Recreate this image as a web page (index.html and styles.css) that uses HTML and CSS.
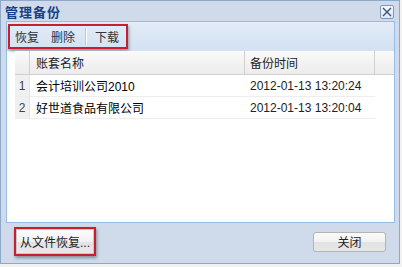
FILE: index.html
```html
<!DOCTYPE html>
<html>
<head>
<meta charset="utf-8">
<link rel="stylesheet" href="styles.css">
</head>
<body>
<div class="win">
  <div class="titlebar">
    <span class="title">管理备份</span>
    <span class="close"><svg width="10" height="10" viewBox="0 0 10 10"><path d="M1 1L9 9M9 1L1 9" stroke="#3c5478" stroke-width="1.4" fill="none"/></svg></span>
  </div>
  <div class="panel">
    <div class="toolbar">
      <div class="mark tbgroup">
        <span class="tbtn">恢复</span>
        <span class="tbtn">删除</span>
        <span class="tsep"></span>
        <span class="tbtn last">下载</span>
      </div>
    </div>
    <div class="grid">
      <div class="ghead">
        <div class="c num"></div>
        <div class="c name">账套名称</div>
        <div class="c time">备份时间</div>
        <div class="c fill"></div>
      </div>
      <div class="grow">
        <div class="c num">1</div>
        <div class="c name">会计培训公司2010</div>
        <div class="c time">2012-01-13 13:20:24</div>
      </div>
      <div class="grow">
        <div class="c num">2</div>
        <div class="c name">好世道食品有限公司</div>
        <div class="c time">2012-01-13 13:20:04</div>
      </div>
    </div>
  </div>
  <div class="footer">
    <div class="mark"><span class="btn wide">从文件恢复...</span></div>
    <span class="btn">关闭</span>
  </div>
</div>
</body>
</html>
```
FILE: styles.css
```css
html, body { margin: 0; padding: 0; }
body {
  width: 402px; height: 267px; overflow: hidden;
  background: #f2f2f2;
  font-family: "Liberation Sans", "Noto Sans CJK SC", sans-serif;
  font-size: 12px; color: #000;
}
.win {
  width: 400px; height: 264px; box-sizing: border-box;
  border: 1px solid #8fa8c8;
  background: #cfdbea;
  display: flex; flex-direction: column;
}
.titlebar {
  height: 20px; display: flex; align-items: center; justify-content: space-between;
  padding: 0 5px 0 4px;
}
.title { color: #15428b; font-weight: bold; font-size: 13px; letter-spacing: 1px; }
.close {
  width: 12px; height: 12px; border: 1px solid #7d98bd; border-radius: 2px;
  background: linear-gradient(#f4f8fd, #dde7f4);
  display: flex; align-items: center; justify-content: center;
  margin-top: 2px;
}
.panel {
  margin: 0 4px 0 5px; height: 202px; box-sizing: border-box;
  border: 1px solid #99bbe8; background: #fff;
  display: flex; flex-direction: column;
}
.toolbar {
  height: 29px; box-sizing: border-box; padding: 2px 0 0 1px;
  background: linear-gradient(#e3ecf8, #d3e1f2);
}
.mark {
  border: 2px solid #c4202d;
  box-shadow: 1px 2px 3px rgba(0,0,0,0.35);
}
.tbgroup {
  width: 120px; height: 25px; box-sizing: border-box;
  display: flex; align-items: center; padding-left: 4px;
  color: #333; white-space: nowrap;
}
.tbtn { padding: 0 6px 0 1px; margin-right: 5px; flex-shrink: 0; }
.tbtn.last { margin-right: 0; padding-right: 0; }
.tsep { flex-shrink: 0; width: 1px; height: 17px; background: #b8c8de; border-right: 1px solid #fff; margin: 0 7px 0 -1px; }
.grid { padding-left: 8px; }
.ghead {
  display: flex; height: 24px; box-sizing: border-box;
  background: linear-gradient(#fafafa, #ececec);
  border-bottom: 1px solid #d0d0d0;
  color: #222;
}
.c { display: flex; align-items: center; box-sizing: border-box; white-space: nowrap; }
.num { width: 15px; justify-content: center; }
.name { width: 215px; padding-left: 6px; }
.time { width: 130px; padding-left: 5px; }
.fill { flex: 1; }
.ghead .c { border-right: 1px solid #d0d0d0; }
.ghead .fill { border-right: none; }
.ghead .num { border-right: 1px solid #d0d0d0; }
.grow { display: flex; height: 22px; box-sizing: border-box; width: 360px; }
.grow .c { border-bottom: 1px solid #ededed; }
.grow .num { background: #f0f0f0; color: #444; border-right: 1px solid #e4e4e4; }
.grow .time { color: #222; }
.footer {
  flex: 1; display: flex; align-items: center; justify-content: space-between;
  padding: 0 13px 3px 13px;
}
.btn {
  display: flex; align-items: center; justify-content: center;
  width: 73px; height: 20px; box-sizing: border-box;
  border: 1px solid #b4b4b4; border-radius: 3px;
  background: linear-gradient(#fbfbfb 0%, #f2f2f2 50%, #e2e2e2 51%, #e8e8e8 100%);
  color: #222;
}
.btn.wide { width: 78px; height: 25px; border-color: #c8c8c8; border-radius: 0; }
```
